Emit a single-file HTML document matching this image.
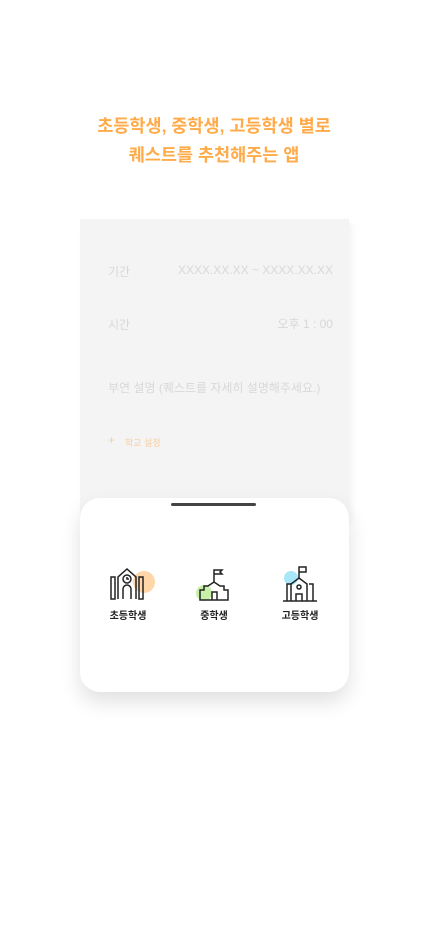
<!DOCTYPE html>
<html><head><meta charset="utf-8"><style>
*{margin:0;padding:0;box-sizing:border-box}
body{width:428px;height:926px;background:#fff;position:relative;overflow:hidden;font-family:"Liberation Sans","Noto Sans CJK KR",sans-serif}
.title{position:absolute;top:112px;left:0;width:428px;text-align:center;color:#FFAB4A;font-weight:bold;font-size:17.5px;line-height:29px}
.card{position:absolute;left:80px;top:219px;width:269px;height:300px;background:#f4f4f4;box-shadow:3px 4px 6px rgba(0,0,0,0.05)}
.t{position:absolute;font-size:12px;color:#d8d8d8}
.sheet{position:absolute;left:80px;top:498px;width:269px;height:194px;background:#fff;border-radius:20px;box-shadow:0 10px 20px rgba(0,0,0,0.12)}
.handle{position:absolute;left:91px;top:5px;width:85px;height:3px;border-radius:2px;background:#444}
.lbl{position:absolute;top:109px;font-size:10px;font-weight:bold;color:#222;width:60px;text-align:center}
</style></head><body>
<div class="title">초등학생, 중학생, 고등학생 별로<br>퀘스트를 추천해주는 앱</div>
<div class="card">
<div class="t" style="left:28px;top:44px">기간</div>
<div class="t" style="right:16px;top:44px">XXXX.XX.XX ~ XXXX.XX.XX</div>
<div class="t" style="left:28px;top:97px">시간</div>
<div class="t" style="right:16px;top:96px">오후 1 : 00</div>
<div class="t" style="left:28px;top:160px">부연 설명 (퀘스트를 자세히 설명해주세요.)</div>
<div class="t" style="left:28px;top:214px;color:#f8cf9e;font-size:12px">+</div>
<div class="t" style="left:45px;top:217px;color:#f8cf9e;font-size:9px">학교 설정</div>
</div>
<div class="sheet">
<div class="handle"></div>
<svg style="position:absolute;left:28px;top:66px" width="50" height="40" viewBox="0 0 50 40" fill="none" stroke="#222" stroke-width="1.5">
<circle cx="36" cy="18" r="11" fill="#FFD6A8" stroke="none"/>
<rect x="3" y="13" width="4" height="22"/><rect x="31" y="13" width="4" height="22"/>
<path d="M10 35V13L19 5L28 13V35"/><path d="M15 35V25a4 4 0 0 1 8 0V35"/>
<circle cx="19" cy="15" r="4"/><path d="M19 13v2h2"/>
</svg>
<svg style="position:absolute;left:115px;top:70px" width="40" height="36" viewBox="0 0 40 36" fill="none" stroke="#222" stroke-width="1.5">
<circle cx="9" cy="25" r="8" fill="#C8F0A8" stroke="none"/>
<path d="M19 14V2h8l-2 2l2 2h-8"/>
<path d="M5 32V22h4v-4h4l6-4l6 4h4v4h4v10z"/><path d="M17 32v-8h5v8"/>
</svg>
<svg style="position:absolute;left:200px;top:67px" width="40" height="38" viewBox="0 0 40 38" fill="none" stroke="#222" stroke-width="1.5">
<circle cx="11" cy="13" r="7" fill="#A8E6FA" stroke="none"/>
<path d="M19 13V2h7v5h-7"/>
<path d="M3 36h34"/><path d="M7 36V19h4"/><path d="M33 36V19h-4"/>
<path d="M11 36V19l8-6l8 6v17"/><circle cx="19" cy="22" r="2"/><path d="M16 36v-7h6v7"/>
</svg>
<div class="lbl" style="left:18px">초등학생</div>
<div class="lbl" style="left:104px">중학생</div>
<div class="lbl" style="left:190px">고등학생</div>
</div>
</body></html>
